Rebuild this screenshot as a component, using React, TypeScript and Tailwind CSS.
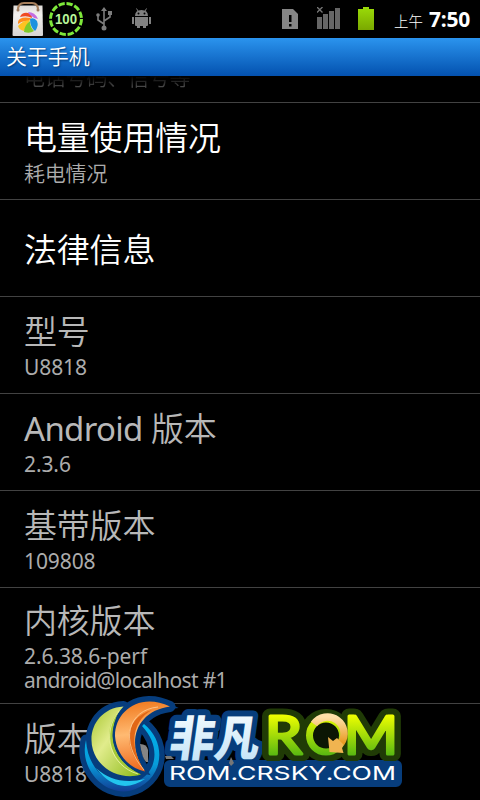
type Entry = {
  title: string;
  lines: string[];
  active?: boolean;
};

const entries: Entry[] = [
  { title: "电量使用情况", lines: ["耗电情况"], active: true },
  { title: "法律信息", lines: [], active: true },
  { title: "型号", lines: ["U8818"] },
  { title: "Android 版本", lines: ["2.3.6"] },
  { title: "基带版本", lines: ["109808"] },
  { title: "内核版本", lines: ["2.6.38.6-perf", "android@localhost #1"] },
  { title: "版本", lines: ["U8818"] },
];

function MarketIcon() {
  return (
    <svg className="h-9 w-8" viewBox="0 0 32 36">
      <defs>
        <linearGradient id="bag" x1="0" y1="0" x2="0" y2="1">
          <stop offset="0" stopColor="#dedbd8" />
          <stop offset=".3" stopColor="#f3f1ef" />
          <stop offset="1" stopColor="#d6d4d2" />
        </linearGradient>
      </defs>
      <path d="M1.500 4.500h29L31 34q0 1-1 1H1.500q-1 0-1-1z" fill="url(#bag)" />
      <path d="M6 9q0-7 6-7h8q6 0 6 7" fill="none" stroke="#a67f5c" strokeWidth="2" />
      <circle cx="6" cy="9" r="1.500" fill="#9b7a60" />
      <circle cx="26" cy="9" r="1.500" fill="#9b7a60" />
      <path d="M8 16q2-5 8-4 4 1 4 5-5-3-12-1" fill="#f04a23" />
      <path d="M16 11q7 0 10 7-5-1-8-4z" fill="#c36be0" />
      <path d="M6 21q1-6 13-4l-3 4q-5-2-10 2z" fill="#ff8a1c" />
      <path d="M6 25q5-6 12-6l-6 11q-5-1-6-5" fill="#ffc321" />
      <path d="M18 20q-6 5-6 11 6 2 10-1-4-4-4-10" fill="#7fca29" />
      <path d="M18 18q0 8 5 12 4-5 2-10-3-4-7-2" fill="#1c91df" />
    </svg>
  );
}

function BatteryPercent() {
  return (
    <svg className="h-9 w-9" viewBox="0 0 36 36">
      <circle cx="18" cy="18" r="15.500" fill="none" stroke="#7ee83a" strokeWidth="3" strokeDasharray="6.3 1.82" />
      <text
        x="18"
        y="23"
        textAnchor="middle"
        fontFamily="Liberation Sans, sans-serif"
        fontSize="14"
        fontWeight="700"
        fill="#b9f59a"
        textLength="22"
        lengthAdjust="spacingAndGlyphs"
      >
        100
      </text>
    </svg>
  );
}

function UsbIcon() {
  return (
    <svg className="h-6 w-4" viewBox="0 0 16 24" fill="#7d7d7d" stroke="#7d7d7d">
      <path d="M8 3v18M8 17l-6-4V8M8 14l6-4V6" fill="none" strokeWidth="1.600" />
      <path d="M5 4l3-4 3 4z" stroke="none" />
      <circle cx="8" cy="21" r="2.500" stroke="none" />
      <circle cx="2" cy="8" r="1.800" stroke="none" />
      <path d="M12 4h4v4h-4z" stroke="none" />
    </svg>
  );
}

function DroidIcon() {
  return (
    <svg className="h-[21px] w-[19px]" viewBox="0 0 19 21" fill="#818181">
      <path d="M3 8q0-6 6.500-6T16 8z" />
      <path d="M6 3L4.500.5M13 3l1.500-2.500" stroke="#818181" />
      <circle cx="6.500" cy="5.500" r="1" fill="#000" />
      <circle cx="12.500" cy="5.500" r="1" fill="#000" />
      <path d="M3 9h13v8q0 1-1 1H4q-1 0-1-1zM0 9h2v7H0zM17 9h2v7h-2zM5 18h3v2H5zM11 18h3v2h-3z" />
    </svg>
  );
}

function StatusBar() {
  return (
    <div className="flex h-[38px] shrink-0 items-start">
      <div className="flex flex-1 items-start pl-3">
        <div className="pt-px"><MarketIcon /></div>
        <div className="ml-1 pt-px"><BatteryPercent /></div>
        <div className="ml-3 pt-[7px]"><UsbIcon /></div>
        <div className="ml-5 pt-2"><DroidIcon /></div>
      </div>
      <svg className="mt-[9px] h-5 w-4" viewBox="0 0 16 20">
        <path d="M0 0h11l5 5v15H0z" fill="#858585" />
        <path d="M7 6h2.500v7H7zM7 15h2.500v2.500H7z" fill="#000" />
      </svg>
      <svg className="ml-[19px] mt-[7px] h-[22px] w-[23px]" viewBox="0 0 23 22" fill="#666">
        <path d="M0 10h5v12H0zM6 7h5v15H6zM12 4h5v18h-5zM18 1h5v21h-5z" />
        <path d="M0 0l5.500 5.500M5.500 0L0 5.500" stroke="#777" strokeWidth="1.300" />
      </svg>
      <svg className="ml-[18px] mt-[7px] h-[23px] w-4" viewBox="0 0 16 23">
        <defs>
          <linearGradient id="battery" x1="0" y1="0" x2="0" y2="1">
            <stop offset="0" stopColor="#9bdc08" />
            <stop offset="1" stopColor="#7aa800" />
          </linearGradient>
        </defs>
        <path d="M5 0h6v2h5v21H0V2h5z" fill="url(#battery)" />
      </svg>
      <div className="ml-5 flex w-[86px] items-baseline whitespace-nowrap text-white">
        <span className="text-[14.5px] font-light leading-[38px]">上午</span>
        <span className="ml-1.5 text-[21px] font-bold leading-[38px] tracking-[-0.2px]">7:50</span>
      </div>
    </div>
  );
}

// Latin words run tighter than digits
function lineStyle(line: string) {
  if (!/^[\x20-\x7e]+$/.test(line)) return "font-[350] tracking-[-0.2px]";
  if (line.includes("@")) return "font-normal tracking-[-0.63px]";
  return "font-normal tracking-[-0.1px]";
}

function Row({ title, lines, active }: Entry) {
  return (
    <li
      className={
        "flex min-h-[97px] shrink-0 flex-col justify-center border-b border-[#424242] pl-6 " +
        (lines.length === 1 ? "pb-[13px] pt-[11px] " : lines.length ? "pb-[11px] pt-[11px] " : "pb-3 pt-[15px] ") +
        (active ? "text-white" : "text-[#b8b8b8]")
      }
    >
      <h2 className={"whitespace-nowrap text-[33px] font-[350] leading-[43px] tracking-[-0.2px] " + (lines.length ? "pb-0.5" : "")}>
        {title.startsWith("Android") ? (
          <>
            <span className="font-normal tracking-[-0.7px]">Android</span>
            {title.slice(7)}
          </>
        ) : (
          title
        )}
      </h2>
      {lines.map((line) => (
        <p key={line} className={"whitespace-nowrap text-[21px] leading-6 text-[#acacac] " + lineStyle(line)}>
          {line}
        </p>
      ))}
    </li>
  );
}

const green = "M123.500 706.500C99 708 87 730 93 750C100 772 124 780 141 774.500C114 763 101 730 123.500 706.500Z";
const orange = "M170 706.500C140 692 115 711 115 736C116 753 128 768 145 771.500C125 743 136 711 170 706.500Z";
const aqua = "M86 740C88 772 111 787 132 783C156 777 163 748 142 726L144 724C169 744 163 783 129 791C102 795 79 767 86 740Z";

function Watermark() {
  return (
    <svg className="absolute left-[76px] top-[690px] h-[110px] w-[334px]" viewBox="76 690 334 110">
      <defs>
        <linearGradient id="lime" x1="0" y1="0" x2="1" y2="1">
          <stop offset="0" stopColor="#a5c52c" />
          <stop offset=".4" stopColor="#e1ec8c" />
          <stop offset="1" stopColor="#8bba16" />
        </linearGradient>
        <linearGradient id="orange" x1=".4" y1="0" x2=".5" y2="1">
          <stop offset="0" stopColor="#f17b20" />
          <stop offset=".45" stopColor="#ffba72" />
          <stop offset="1" stopColor="#ee6619" />
        </linearGradient>
        <linearGradient id="aqua" x1="0" y1="0" x2="0" y2="1">
          <stop offset="0" stopColor="#00b4ec" />
          <stop offset=".6" stopColor="#079cda" />
          <stop offset="1" stopColor="#123d94" />
        </linearGradient>
        <linearGradient id="ice" x1="0" y1="0" x2="0" y2="1">
          <stop offset="0" stopColor="#fff" />
          <stop offset="1" stopColor="#bce1f7" />
        </linearGradient>
        <linearGradient id="leaf" gradientUnits="userSpaceOnUse" x1="0" y1="715" x2="0" y2="757">
          <stop offset="0" stopColor="#efff00" />
          <stop offset="1" stopColor="#52b512" />
        </linearGradient>
        <linearGradient id="gold" x1="0" y1="0" x2="0" y2="1">
          <stop offset="0" stopColor="#ffe0a8" />
          <stop offset="1" stopColor="#e89a20" />
        </linearGradient>
      </defs>

      {/* emblem backing */}
      <g fill="#063d7d" stroke="#063d7d" strokeWidth="11" strokeLinejoin="round">
        <path d={green} />
        <path d={orange} />
        <path d={aqua} />
        <path d="M92 745Q120 720 140 775L120 785Z" />
      </g>
      <path d="M140 744q7 0 8 6v12h-2q-4-4-6-18z" fill="#858585" />

      <path d={aqua} fill="url(#aqua)" />
      <path d="M96 768Q115 786 145 779Q118 797 96 768" fill="#22c5ee" />
      <path d={green} fill="url(#lime)" />
      <path d="M119 711C99 732 112 767 141 774.500C114 763 106 736 119 711Z" fill="#a3c935" />
      <path d="M119 711C101 733 110 766 138 774" fill="none" stroke="#edf5a8" strokeWidth=".8" />
      {/* dark gap between the two crescents */}
      <path d={orange} fill="url(#orange)" stroke="#063d7d" strokeWidth="5" paintOrder="stroke" />
      <path d="M152 710C126 717 120 745 145 771.500C126 743 135 719 152 710Z" fill="#e16717" />
      <path d="M158 707C128 710 119 741 144 770" fill="none" stroke="#ffd09c" strokeWidth=".8" />

      {/* halos go under every letter */}
      <g strokeLinejoin="round" strokeWidth="12">
        <text x="168" y="756" fontFamily="Noto Sans CJK SC, sans-serif" fontSize="48" fontWeight="900" textLength="90" lengthAdjust="spacingAndGlyphs" fill="#073d7c" stroke="#073d7c" transform="skewX(-8) translate(106 0)">非凡</text>
        <rect x="170" y="766" width="226" height="15" fill="#073d7c" stroke="#073d7c" />
        <g fill="#203b06" stroke="#203b06" strokeWidth="15" fontFamily="Lato, sans-serif" fontSize="53">
          <text x="265" y="754" textLength="37" lengthAdjust="spacingAndGlyphs">R</text>
          <circle cx="326" cy="735.500" r="19" />
          <text x="344" y="754" textLength="54" lengthAdjust="spacingAndGlyphs">M</text>
        </g>
        <rect x="262" y="766" width="134" height="15" fill="#073d7c" stroke="#073d7c" strokeWidth="10" />
      </g>
      <path d="M165 756h6l3 3h-8zM231 757l3 6-3 3-2-3z" fill="#777" />
      <text x="168" y="756" fontFamily="Noto Sans CJK SC, sans-serif" fontSize="48" fontWeight="900" textLength="90" lengthAdjust="spacingAndGlyphs" fill="url(#ice)" transform="skewX(-8) translate(106 0)">非凡</text>
      <g fill="url(#leaf)" stroke="url(#leaf)" strokeWidth="3.200" strokeLinejoin="round" fontFamily="Lato, sans-serif" fontSize="53">
        <text x="265" y="754" textLength="37" lengthAdjust="spacingAndGlyphs">R</text>
        <text x="344" y="754" textLength="54" lengthAdjust="spacingAndGlyphs">M</text>
      </g>
      <circle cx="326" cy="735.500" r="16.500" fill="#0c1604" stroke="url(#leaf)" strokeWidth="7" />
      <path d="M314 724A16.500 16.500 0 0 1 341 743" fill="none" stroke="url(#gold)" strokeWidth="7.500" />
      <path d="M328 737l5 4 4-3 7 7-2 3 1.500 5-14-1z" fill="#f0b450" />

      <text x="169" y="780" fontFamily="Inter, Liberation Sans, sans-serif" fontSize="19" fontWeight="400" fill="#fff" textLength="227" lengthAdjust="spacingAndGlyphs">ROM.CRSKY.COM</text>
    </svg>
  );
}

export default function App() {
  return (
    <div className="relative flex h-[800px] w-[480px] flex-col overflow-hidden bg-black font-['Noto_Sans','Noto_Sans_CJK_SC',sans-serif]">
      <StatusBar />
      <header className="h-[38px] shrink-0 bg-linear-to-b from-[#2b94ee] to-[#0451af] pl-1.5 text-[21px] font-[350] leading-[37px] tracking-[-0.1px] text-white [text-shadow:1px_1px_2px_#063b73]">
        关于手机
      </header>
      <main className="min-h-0 flex-1 overflow-hidden">
        {/* summary of the row that is scrolled under the title bar */}
        <div className="h-[27px] overflow-hidden border-b border-[#424242] pl-6">
          <p className="-mt-[11px] bg-linear-to-b from-black from-30% to-[#5a5a5a] bg-clip-text text-[21px] font-[350] leading-6 tracking-[-0.2px] text-transparent">
            电话号码、信号等
          </p>
        </div>
        <ul className="flex flex-col">
          {entries.map((entry) => (
            <Row key={entry.title} {...entry} />
          ))}
        </ul>
      </main>
      <Watermark />
    </div>
  );
}
